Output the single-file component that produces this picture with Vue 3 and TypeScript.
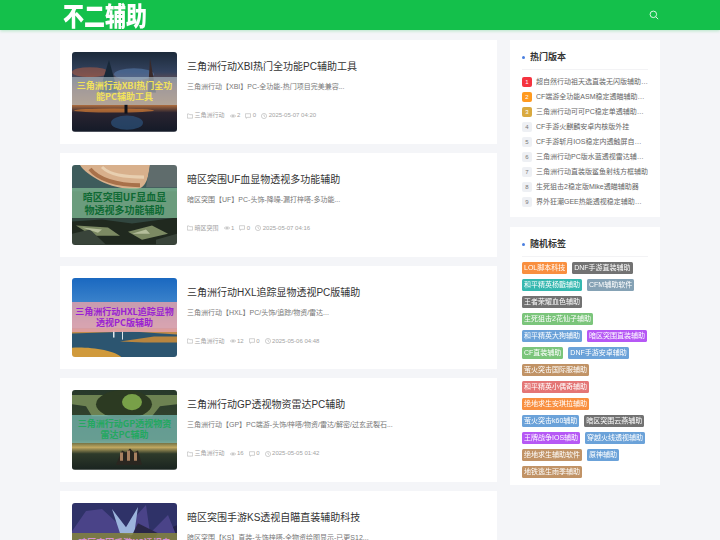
<script setup lang="ts">
interface Post {
  title: string
  summary: string
  cat: string
  views: number
  date: string
  band: string
  scene: string
}
const posts: Post[] = [
  { title: '三角洲行动XBI热门全功能PC辅助工具', summary: '三角洲行动【XBI】PC-全功能-热门项目完美兼容...', cat: '三角洲行动', views: 2, date: '2025-05-07 04:20', band: '三角洲行动XBI热门全功能PC辅助工具', scene: 's1' },
  { title: '暗区突围UF血显物透视多功能辅助', summary: '暗区突围【UF】PC-头饰-降噪-漏打梓嗒-多功能...', cat: '暗区突围', views: 1, date: '2025-05-07 04:16', band: '暗区突围UF显血显物透视多功能辅助', scene: 's2' },
  { title: '三角洲行动HXL追踪显物透视PC版辅助', summary: '三角洲行动【HXL】PC/头饰/追踪/物资/雷达...', cat: '三角洲行动', views: 12, date: '2025-05-06 04:48', band: '三角洲行动HXL追踪显物透视PC版辅助', scene: 's3' },
  { title: '三角洲行动GP透视物资雷达PC辅助', summary: '三角洲行动【GP】PC端游-头饰/梓嗒/物资/雷达/解密/过玄武裂石...', cat: '三角洲行动', views: 16, date: '2025-05-05 01:42', band: '三角洲行动GP透视物资雷达PC辅助', scene: 's4' },
  { title: '暗区突围手游KS透视自瞄直装辅助科技', summary: '暗区突围【KS】直装-头饰梓嗒-全物资绘图显示-已更S12...', cat: '暗区突围', views: 8, date: '2025-05-04 03:10', band: '暗区突围手游KS透视自瞄直装辅助科技', scene: 's5' },
]
const hot: string[] = [
  '超自然行动祖天选直装无闪版辅助器工具',
  'CF端游全功能ASM稳定透瞄辅助工具',
  '三角洲行动可可PC稳定单透辅助工具',
  'CF手游火麒麟安卓内核版外挂',
  'CF手游斩月IOS稳定内透触屏自瞄辅助',
  '三角洲行动PC版水蓝透视雷达辅助工具',
  '三角洲行动直装版鲨鱼射线方框辅助',
  '生死狙击2稳定版Mike透瞄辅助器',
  '界外狂潮GEE热能透视稳定辅助工具',
]
const tags: { t: string; c: string }[] = [
  { t: 'LOL脚本科技', c: 'orange' }, { t: 'DNF手游直装辅助', c: 'gray' },
  { t: '和平精英杨戬辅助', c: 'teal' }, { t: 'CFM辅助软件', c: 'slate' },
  { t: '王者荣耀血色辅助', c: 'gray' },
  { t: '生死狙击2花仙子辅助', c: 'green' },
  { t: '和平精英大狗辅助', c: 'blue' }, { t: '暗区突围直装辅助', c: 'purple' },
  { t: 'CF直装辅助', c: 'green' }, { t: 'DNF手游安卓辅助', c: 'blue' },
  { t: '萤火突击国际服辅助', c: 'tan' },
  { t: '和平精英小偶奇辅助', c: 'red' },
  { t: '绝地求生安琪拉辅助', c: 'orange' },
  { t: '萤火突击k60辅助', c: 'blue' }, { t: '暗区突围云燕辅助', c: 'gray' },
  { t: '王牌战争IOS辅助', c: 'purple' }, { t: '穿越火线透视辅助', c: 'blue' },
  { t: '绝地求生辅助软件', c: 'tan' }, { t: '原神辅助', c: 'blue' },
  { t: '地铁逃生雨季辅助', c: 'tan' },
]
</script>

<template>
  <div class="page">
    <header class="topbar">
      <div class="logo">不二辅助</div>
      <svg class="search" viewBox="0 0 12 12" width="10" height="10" fill="none" stroke="#fff" stroke-width="1">
        <circle cx="5.2" cy="5.2" r="3.9" />
        <path d="M8.2 8.2 11 11" />
      </svg>
    </header>

    <div class="layout">
      <main class="list">
        <article v-for="p in posts" :key="p.title" class="post">
          <div class="thumb" :class="p.scene">
            <svg v-if="p.scene === 's1'" class="art" viewBox="0 0 105 79" preserveAspectRatio="none">
              <defs>
                <linearGradient id="a1" x1="0" y1="0" x2="0" y2="1">
                  <stop offset="0" stop-color="#1c2a3a" />
                  <stop offset=".25" stop-color="#33425e" />
                  <stop offset=".45" stop-color="#8a5648" />
                  <stop offset=".66" stop-color="#b5713f" />
                  <stop offset=".76" stop-color="#2a2430" />
                  <stop offset="1" stop-color="#141a28" />
                </linearGradient>
              </defs>
              <rect width="105" height="79" fill="url(#a1)" />
              <ellipse cx="62" cy="22" rx="20" ry="6" fill="#5a7fb0" opacity=".55" />
              <ellipse cx="18" cy="20" rx="18" ry="5" fill="#c0603f" opacity=".5" />
              <path d="M27 40 37 8 46 40Z" fill="#182838" />
              <path d="M76 40 78 6 84 40Z" fill="#3a2a2a" />
              <ellipse cx="42" cy="58" rx="40" ry="2" fill="#d07a35" opacity=".7" />
              <ellipse cx="55" cy="70" rx="16" ry="7" fill="#2f5a88" opacity=".6" />
              <rect x="52.5" y="52" width="3" height="9" fill="#10121a" />
            </svg>
            <svg v-else-if="p.scene === 's2'" class="art" viewBox="0 0 105 79" preserveAspectRatio="none">
              <rect width="105" height="79" fill="#31463f" />
              <rect width="105" height="26" fill="#3e5c5c" />
              <path d="M8 0C14 10 38 24 62 24 70 24 76 20 78 0Z" fill="#d8b08c" />
              <path d="M18 4C26 14 44 20 68 20" stroke="#a8714a" stroke-width="4" fill="none" />
              <path d="M30 2C38 10 52 12 72 12" stroke="#e8cfb0" stroke-width="3" fill="none" />
              <path d="M78 0h27v22H74Z" fill="#5f6c6c" />
              <path d="M0 56 30 54 60 58 105 52V79H0Z" fill="#20291f" />
              <path d="M4 60 36 62 48 70 20 70ZM56 66 80 60 96 68 70 74Z" fill="#7c8a63" />
              <path d="M0 68 18 64 34 79H0ZM84 74 105 68V79H84Z" fill="#39443a" />
              <path d="M10 62 30 64 26 67ZM60 68 74 64 78 68Z" fill="#c8cfae" opacity=".75" />
            </svg>
            <svg v-else-if="p.scene === 's3'" class="art" viewBox="0 0 105 79" preserveAspectRatio="none">
              <defs>
                <linearGradient id="a3" x1="0" y1="0" x2="0" y2="1">
                  <stop offset="0" stop-color="#1a68c0" />
                  <stop offset=".35" stop-color="#3f86cc" />
                  <stop offset=".6" stop-color="#9cb8d0" />
                </linearGradient>
              </defs>
              <rect width="105" height="79" fill="url(#a3)" />
              <path d="M0 50H105V79H0Z" fill="#2c5570" />
              <path d="M0 50H105V56L60 53 0 55Z" fill="#c08a4a" />
              <path d="M48 63 82 58 105 58V64H72Z" fill="#b8853f" />
              <path d="M0 69C20 68 44 72 50 79H0Z" fill="#d09a3c" />
              <rect x="41" y="52" width="1.5" height="7" fill="#dfe6ea" />
              <rect x="50" y="52" width="1" height="9" fill="#dfe6ea" />
            </svg>
            <svg v-else-if="p.scene === 's4'" class="art" viewBox="0 0 105 79" preserveAspectRatio="none">
              <defs>
                <linearGradient id="a4" x1="0" y1="0" x2="0" y2="1">
                  <stop offset="0" stop-color="#27382a" />
                  <stop offset=".62" stop-color="#3a4a30" />
                  <stop offset=".72" stop-color="#c0a860" />
                  <stop offset=".8" stop-color="#2e3a2a" />
                  <stop offset="1" stop-color="#1a2420" />
                </linearGradient>
              </defs>
              <rect width="105" height="79" fill="url(#a4)" />
              <path d="M0 5H105V14L88 16 80 26H20L14 16 0 14Z" fill="#6d8252" />
              <ellipse cx="52" cy="14" rx="28" ry="14" fill="#2c3a22" />
              <ellipse cx="60" cy="12" rx="10" ry="8" fill="#78a048" />
              <path d="M44 74 50 60 54 62 58 58 62 62 66 60 70 74Z" fill="#2a2620" />
              <path d="M48 62h3v8h-3ZM55 60h3v10h-3ZM62 62h3v8h-3Z" fill="#a88060" />
            </svg>
            <svg v-else class="art" viewBox="0 0 105 79" preserveAspectRatio="none">
              <rect width="105" height="79" fill="#23234a" />
              <path d="M0 0H105V22L70 36 30 30 0 40Z" fill="#2f3268" />
              <path d="M30 6 52 26 74 2 78 30 96 12 105 34V60H0V28L14 8Z" fill="#4a4388" />
              <path d="M40 6 54 24 66 4 62 32 48 30Z" fill="#9cb4dc" />
              <path d="M66 20 86 30 72 50 56 40Z" fill="#2a2748" />
            </svg>
            <div class="band" :class="'band-' + p.scene">{{ p.band }}</div>
          </div>
          <div class="body">
            <h2 class="title">{{ p.title }}</h2>
            <p class="summary">{{ p.summary }}</p>
            <div class="meta">
              <span class="mi">
                <svg viewBox="0 0 10 10" width="6" height="6" fill="none" stroke="#aaa" stroke-width=".9"><path d="M.6 8.6V1.6h3l1 1.2h4.8v5.8Z" /></svg>
                {{ p.cat }}
              </span>
              <span class="mi">
                <svg viewBox="0 0 10 10" width="6" height="6" fill="none" stroke="#aaa" stroke-width=".9"><path d="M.4 5C2 2.6 8 2.6 9.6 5 8 7.4 2 7.4.4 5Z" /><circle cx="5" cy="5" r="1.2" /></svg>
                {{ p.views }}
              </span>
              <span class="mi">
                <svg viewBox="0 0 10 10" width="6" height="6" fill="none" stroke="#aaa" stroke-width=".9"><path d="M.7 1.2h8.6v6H4L2.4 9V7.2H.7Z" /></svg>
                0
              </span>
              <span class="mi">
                <svg viewBox="0 0 10 10" width="6" height="6" fill="none" stroke="#aaa" stroke-width=".9"><circle cx="5" cy="5" r="4.3" /><path d="M5 2.4V5l1.8 1.2" /></svg>
                {{ p.date }}
              </span>
            </div>
          </div>
        </article>
      </main>

      <aside class="side">
        <section class="widget hot-widget">
          <h3 class="wtitle">热门版本</h3>
          <ol class="hot">
            <li v-for="(h, i) in hot" :key="h" class="hot-item">
              <span class="rank" :class="'r' + (i + 1)">{{ i + 1 }}</span>
              <span class="hot-text">{{ h }}</span>
            </li>
          </ol>
        </section>
        <section class="widget">
          <h3 class="wtitle">随机标签</h3>
          <div class="tags">
            <span v-for="t in tags" :key="t.t" class="tag" :class="t.c">{{ t.t }}</span>
          </div>
        </section>
      </aside>
    </div>
  </div>
</template>

<style scoped>
.page {
  height: 540px;
  overflow: hidden;
  background: #f4f5f8;
  font-family: "Liberation Sans", "Noto Sans CJK SC", sans-serif;
}
.topbar {
  height: 30px;
  background: #14c04b;
  box-shadow: 0 1px 3px rgba(20, 192, 75, 0.28);
  display: flex;
  align-items: center;
  justify-content: space-between;
  padding: 0 61px 0 63px;
}
.logo {
  color: #fff;
  font-family: "Noto Sans CJK SC", sans-serif;
  font-weight: 900;
  font-size: 21px;
  line-height: 30px;
  transform: scaleY(1.25);
  transform-origin: left center;
}
.search {
  display: block;
}
.layout {
  width: 600px;
  margin: 10px auto 0;
  display: grid;
  grid-template-columns: 437px 150px;
  column-gap: 13px;
  align-items: start;
}
.list {
  display: flex;
  flex-direction: column;
  gap: 9px;
}
.post {
  background: #fff;
  padding: 12px;
  display: flex;
  gap: 10px;
}
.thumb {
  position: relative;
  flex: none;
  width: 105px;
  height: 79.75px;
  border-radius: 3px;
  overflow: hidden;
}
.art {
  display: block;
  width: 100%;
  height: 100%;
  filter: blur(0.7px);
}
.band {
  position: absolute;
  left: 0;
  right: 0;
  top: 25px;
  height: 28px;
  padding: 0 3px;
  display: flex;
  align-items: center;
  justify-content: center;
  text-align: center;
  font-size: 9px;
  line-height: 11px;
  font-weight: 700;
  font-family: "Noto Sans CJK SC", sans-serif;
}
.band-s1 {
  background: rgba(176, 196, 205, 0.62);
  color: #f1e25a;
}
.band-s2 {
  background: rgba(130, 190, 150, 0.72);
  color: #0f6a34;
  top: 23px;
  height: 30px;
  padding: 0 10px;
  font-size: 10px;
  line-height: 13px;
}
.band-s3 {
  background: rgba(226, 160, 170, 0.85);
  color: #9a22d2;
  top: 24px;
  height: 30px;
}
.band-s4 {
  background: rgba(120, 190, 185, 0.72);
  color: #23a860;
  top: 25px;
  height: 28px;
}
.band-s5 {
  background: rgba(130, 130, 60, 0.85);
  color: #d890d0;
  top: 30px;
  height: 30px;
}
.body {
  flex: 1;
  min-width: 0;
  display: flex;
  flex-direction: column;
}
.title {
  margin: 8px 0 0;
  font-size: 10px;
  line-height: 14px;
  font-weight: 400;
  color: #333;
}
.summary {
  margin: 7px 0 0;
  font-size: 7px;
  line-height: 11px;
  color: #777;
}
.meta {
  margin-top: 19px;
  display: flex;
  gap: 5px;
  font-size: 6px;
  line-height: 9px;
  color: #a3a3a3;
}
.mi {
  display: inline-flex;
  align-items: center;
  gap: 1.5px;
}
.side {
  display: flex;
  flex-direction: column;
  gap: 10px;
}
.widget {
  background: #fff;
  padding: 11px 12px 7px;
}
.hot-widget {
  padding-bottom: 10px;
}
.wtitle {
  position: relative;
  margin: 0;
  padding: 0 0 5px 8px;
  border-bottom: 1px solid #f3f3f5;
  font-size: 9px;
  line-height: 13px;
  font-weight: 700;
  color: #333;
}
.wtitle::before {
  content: "";
  position: absolute;
  left: 0;
  top: 5px;
  width: 3px;
  height: 3px;
  border-radius: 50%;
  background: #4a7fe0;
}
.hot {
  list-style: none;
  margin: 7px 0 0;
  padding: 0;
  display: flex;
  flex-direction: column;
  gap: 5px;
}
.hot-item {
  display: flex;
  align-items: center;
  gap: 4px;
  height: 10px;
}
.rank {
  flex: none;
  width: 10px;
  height: 10px;
  border-radius: 2px;
  background: #eef0f4;
  color: #777;
  font-size: 6px;
  line-height: 10px;
  text-align: center;
}
.r1 {
  background: #f5333f;
  color: #fff;
}
.r2 {
  background: #ff9a1f;
  color: #fff;
}
.r3 {
  background: #d9a93f;
  color: #fff;
}
.hot-text {
  width: 112px;
  font-size: 7px;
  line-height: 10px;
  color: #666;
  white-space: nowrap;
  overflow: hidden;
  text-overflow: ellipsis;
}
.tags {
  margin-top: 5px;
  display: flex;
  flex-wrap: wrap;
  gap: 5px;
}
.tag {
  height: 12px;
  padding: 0 2px;
  border-radius: 1.5px;
  font-size: 7px;
  line-height: 12px;
  color: #fff;
  white-space: nowrap;
  opacity: 0.95;
}
.orange { background: #f98a35; }
.gray { background: #6b6b6b; }
.teal { background: #2bb5ac; }
.slate { background: #7f9eb2; }
.green { background: #74c274; }
.blue { background: #649ed8; }
.purple { background: #b350f5; }
.tan { background: #be8e5e; }
.red { background: #e36f6f; }
</style>

<style>
html, body {
  margin: 0;
  overflow: hidden;
}
</style>
